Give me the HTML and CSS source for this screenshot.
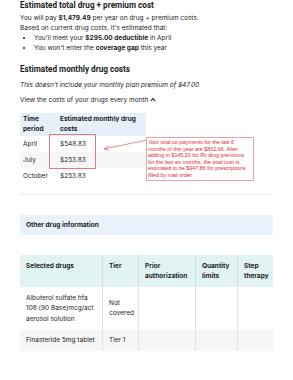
FILE: index.html
```html
<!DOCTYPE html>
<html lang="en">
  <head>
    <meta charset="UTF-8" />
    <title>Drug costs</title>
    <link rel="stylesheet" href="styles.css">
  </head>
  <body>
    <!-- total cost -->
    <section class="total">
      <h2>Estimated total drug + premium cost</h2>
      <p>You will pay <b>$1,479.49</b> per year on drug + premium costs.</p>
      <p>Based on current drug costs, it's estimated that:</p>
      <ul>
        <li>You'll meet your <b>$295.00 deductible</b> in April</li>
        <li>You won't enter the <b>coverage gap</b> this year</li>
      </ul>
    </section>

    <!-- monthly costs -->
    <section class="monthly">
      <h2>Estimated monthly drug costs</h2>
      <p class="note">This doesn't include your monthly plan premium of $47.00.</p>
      <p class="toggle">
        View the costs of your drugs every month
        <svg class="caret" width="6" height="5" viewBox="0 0 6 5">
          <path d="M0.8 4 L3 1.6 L5.2 4" stroke="#1b1b1b" stroke-width="1.1" fill="none" />
        </svg>
      </p>

      <div class="month-wrap">
        <table class="month-table">
          <thead>
            <tr><th class="col-time">Time period</th><th>Estimated monthly drug costs</th></tr>
          </thead>
          <tbody>
            <tr><td>April</td><td>$548.83</td></tr>
            <tr class="alt"><td>July</td><td>$253.83</td></tr>
            <tr><td>October</td><td>$253.83</td></tr>
          </tbody>
        </table>

        <div class="mark"></div>
        <svg class="arrow" width="46" height="14" viewBox="0 0 46 14">
          <line x1="45" y1="1" x2="2" y2="10" stroke="#e0707c" stroke-width="0.8" />
          <path d="M2 10 L7 6.5 M2 10 L7.5 11.5" stroke="#e0707c" stroke-width="0.8" fill="none" />
        </svg>
        <div class="callout">
          Your total co-payments for the last 6<br />
          months of this year are $802.66. After<br />
          adding in $145.20 for Rx drug premiums<br />
          for the last six months, the total cost is<br />
          estimated to be $947.86 for prescriptions<br />
          filled by mail order.
        </div>
      </div>
    </section>

    <hr />

    <div class="info-bar">Other drug information</div>

    <table class="drug-table">
      <thead>
        <tr>
          <th class="c-drug">Selected drugs</th>
          <th class="c-tier">Tier</th>
          <th class="c-prior">Prior authorization</th>
          <th class="c-qty">Quantity limits</th>
          <th>Step therapy</th>
        </tr>
      </thead>
      <tbody>
        <tr>
          <td>Albuterol sulfate hfa 108 (90 Base)mcg/act aerosol solution</td>
          <td>Not covered</td>
          <td></td><td></td><td></td>
        </tr>
        <tr class="alt">
          <td>Finasteride 5mg tablet</td>
          <td>Tier 1</td>
          <td></td><td></td><td></td>
        </tr>
      </tbody>
    </table>
  </body>
</html>
```

FILE: styles.css
```css
body {
  margin: 0;
  padding: 0 20px;
  font-family: Inter, "Liberation Sans", sans-serif;
  font-size: 6.5px;
  color: #1b1b1b;
  background-color: white;
}

h2 {
  font-family: Roboto, "Liberation Sans", sans-serif;
  font-size: 8.2px;
  line-height: 10px;
  font-weight: 700;
  margin: 0;
}

p {
  margin: 0;
  line-height: 10px;
}

.total h2 {
  margin-bottom: 3px;
}

ul {
  margin: 0;
  padding-left: 14px;
}

li {
  line-height: 10px;
}

.monthly {
  margin-top: 11px;
}

.monthly h2 {
  margin-bottom: 6px;
}

.note {
  font-style: italic;
  margin-bottom: 5px;
}

.caret {
  vertical-align: 0;
}

.month-wrap {
  position: relative;
  margin-top: 8px;
}

table {
  border-collapse: collapse;
}

.month-table {
  width: 126px;
}

.month-table th {
  background-color: #e6f0fb;
  text-align: left;
  font-weight: 700;
  line-height: 9.5px;
  padding: 2px 3px;
  vertical-align: top;
}

.month-table .col-time {
  width: 31px;
}

.month-table td {
  padding: 3px 3px;
  line-height: 10px;
}

.alt td {
  background-color: #f6f6f6;
}

/* red box round the two values */
.mark {
  position: absolute;
  left: 29px;
  top: 21px;
  width: 45px;
  height: 33px;
  border: 1px solid #de7a85;
}

.arrow {
  position: absolute;
  left: 82px;
  top: 26px;
}

.callout {
  position: absolute;
  left: 126px;
  top: 24px;
  width: 104px;
  padding: 1px 1px 2px 1px;
  border: 1px solid #eba1a8;
  background-color: white;
  color: #e3262f;
  font-family: "Liberation Sans", sans-serif;
  font-size: 5.4px;
  line-height: 6.5px;
  white-space: nowrap;
}

hr {
  border: none;
  border-top: 1px solid #ececec;
  margin: 10px 0 0 0;
}

.info-bar {
  margin-top: 20px;
  background-color: #e8f1fc;
  font-weight: 700;
  padding: 6px 6px;
  line-height: 8px;
}

.drug-table {
  width: 253px;
  margin-top: 20px;
  table-layout: fixed;
}

.drug-table th {
  background-color: #e1f2f3;
  text-align: left;
  vertical-align: top;
  font-weight: 700;
  line-height: 10px;
  padding: 6px 6px;
  border-left: 1px solid #cfdddd;
}

.drug-table td {
  line-height: 10.5px;
  padding: 5.5px 6px;
  border-left: 1px solid #e2e2e2;
}

.drug-table th:first-child,
.drug-table td:first-child {
  border-left: none;
}

.drug-table .c-drug {
  width: 70px;
}

.drug-table .c-tier {
  width: 23px;
}

.drug-table .c-prior {
  width: 44px;
}

.drug-table .c-qty {
  width: 29px;
}
```
